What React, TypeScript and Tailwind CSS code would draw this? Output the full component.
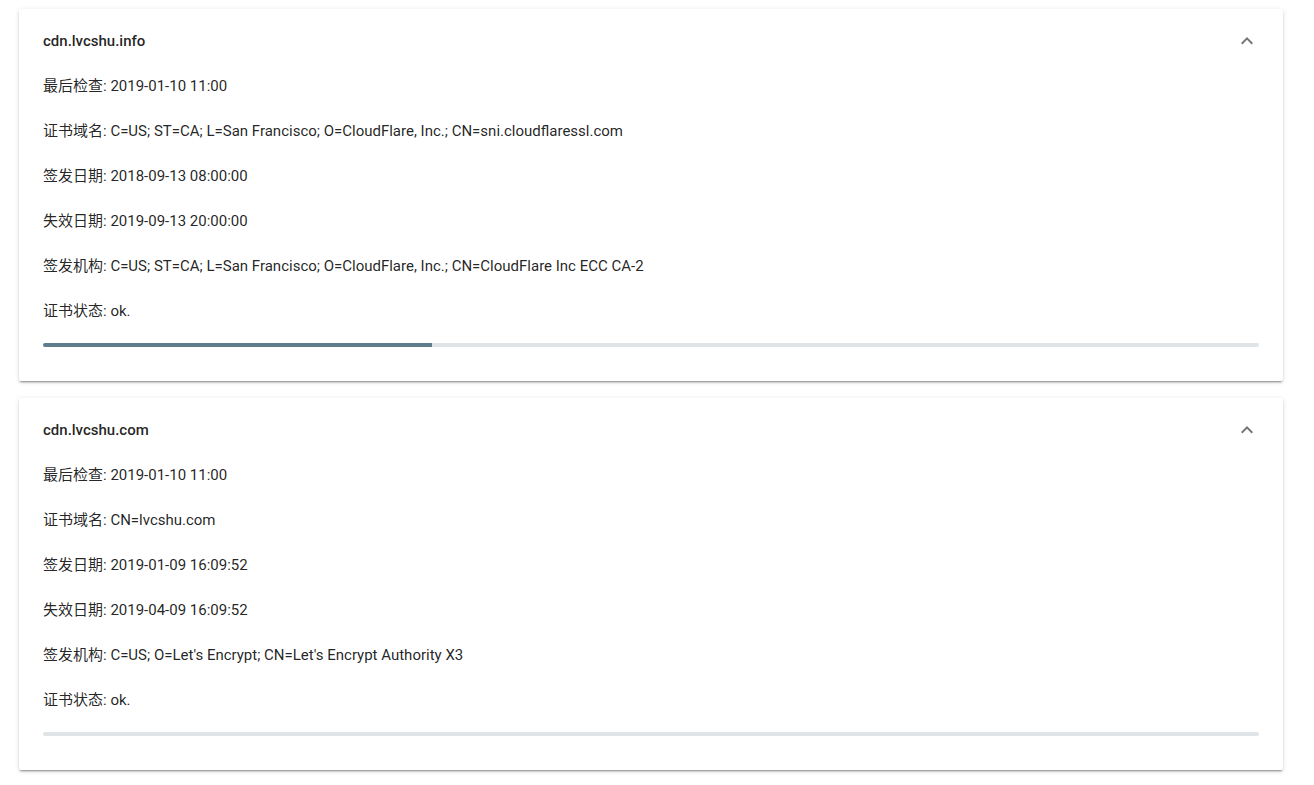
import { useState } from 'react';

type Cert = {
    host: string;
    checked: string;
    subject: string;
    issued: string;
    expires: string;
    issuer: string;
    status: string;
    progress: number;
};

const certs: Cert[] = [
    {
        host: 'cdn.lvcshu.info',
        checked: '2019-01-10 11:00',
        subject: 'C=US; ST=CA; L=San Francisco; O=CloudFlare, Inc.; CN=sni.cloudflaressl.com',
        issued: '2018-09-13 08:00:00',
        expires: '2019-09-13 20:00:00',
        issuer: 'C=US; ST=CA; L=San Francisco; O=CloudFlare, Inc.; CN=CloudFlare Inc ECC CA-2',
        status: 'ok.',
        progress: 32,
    },
    {
        host: 'cdn.lvcshu.com',
        checked: '2019-01-10 11:00',
        subject: 'CN=lvcshu.com',
        issued: '2019-01-09 16:09:52',
        expires: '2019-04-09 16:09:52',
        issuer: "C=US; O=Let's Encrypt; CN=Let's Encrypt Authority X3",
        status: 'ok.',
        progress: 0,
    },
];

function ExpandLess() {
    return (
        <svg viewBox="0 0 24 24" className="w-6 h-6" fill="#757575">
            <path d="M12 8l-6 6 1.41 1.41L12 10.83l4.59 4.58L18 14z" />
        </svg>
    );
}

function CertPanel({ cert }: { cert: Cert }) {
    const [open, setOpen] = useState(true);
    const rows = [
        ['最后检查', cert.checked],
        ['证书域名', cert.subject],
        ['签发日期', cert.issued],
        ['失效日期', cert.expires],
        ['签发机构', cert.issuer],
        ['证书状态', cert.status],
    ];

    return (
        <div className="w-[1264px] ml-[19px] bg-white rounded-[2px] shadow-[0_3px_1px_-2px_rgba(0,0,0,0.2),0_2px_2px_0_rgba(0,0,0,0.14),0_1px_5px_0_rgba(0,0,0,0.12)]">
            {/* header */}
            <div
                className="flex items-center justify-between px-6 h-16 cursor-pointer"
                onClick={() => setOpen(!open)}
            >
                <span className="text-[15px] leading-5 font-medium text-black/[0.87]">{cert.host}</span>
                <ExpandLess />
            </div>
            {open && (
                <div className="px-6 pb-[34px] mt-[3px]">
                    <div className="flex flex-col gap-[25px]">
                        {rows.map(([label, value]) => (
                            <p key={label} className="text-[15px] leading-5 text-black/[0.87]">
                                {label}: {value}
                            </p>
                        ))}
                    </div>
                    <div className="mt-[22px] h-1 rounded-[2px] bg-[#dfe4e8] overflow-hidden">
                        <div className="h-full bg-[#607d8b]" style={{ width: `${cert.progress}%` }} />
                    </div>
                </div>
            )}
        </div>
    );
}

export default function App() {
    return (
        <div
            className="min-h-screen bg-white pt-[9px] flex flex-col gap-[17px]"
            style={{ fontFamily: 'Roboto, "Noto Sans CJK SC", sans-serif' }}
        >
            {certs.map((c) => (
                <CertPanel key={c.host} cert={c} />
            ))}
        </div>
    );
}
